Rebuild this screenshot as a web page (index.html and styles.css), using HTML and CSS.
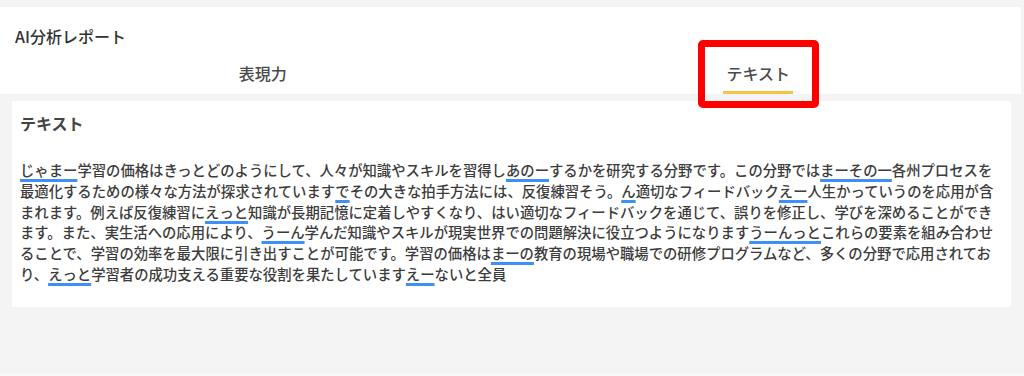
FILE: index.html
```html
<!DOCTYPE html>
<html lang="ja">
<head>
    <meta charset="UTF-8">
    <meta name="viewport" content="width=device-width, initial-scale=1.0">
    <title>AI分析レポート</title>
    <link rel="stylesheet" href="styles.css">
</head>
<body>
    <div class="page">
        <header class="report-header">
            <h1 class="report-title">AI分析レポート</h1>
            <nav class="tabs">
                <div class="tab"><span class="tab-label">表現力</span></div>
                <div class="tab active"><span class="tab-label">テキスト</span></div>
            </nav>
            <!-- annotation box around the active tab -->
            <div class="highlight"></div>
        </header>

        <section class="card">
            <h2 class="card-title">テキスト</h2>
            <p class="transcript"><span class="filler">じゃまー</span>学習の価格はきっとどのようにして、人々が知識やスキルを習得し<span class="filler">あのー</span>するかを研究する分野です。この分野では<span class="filler">まーその一</span>各州プロセスを最適化するための様々な方法が探求されています<span class="filler">で</span>その大きな拍手方法には、反復練習そう。<span class="filler">ん</span>適切なフィードバック<span class="filler">えー</span>人生かっていうのを応用が含まれます。例えば反復練習に<span class="filler">えっと</span>知識が長期記憶に定着しやすくなり、はい適切なフィードバックを通じて、誤りを修正し、学びを深めることができます。また、実生活への応用により、<span class="filler">うーん</span>学んだ知識やスキルが現実世界での問題解決に役立つようになります<span class="filler">うーんっと</span>これらの要素を組み合わせることで、学習の効率を最大限に引き出すことが可能です。学習の価格は<span class="filler">まーの</span>教育の現場や職場での研修プログラムなど、多くの分野で応用されており、<span class="filler">えっと</span>学習者の成功支える重要な役割を果たしています<span class="filler">えー</span>ないと全員</p>
        </section>
    </div>
</body>
</html>
```

FILE: styles.css
```css
html {
    background-color: #f8f8f8;
}
body {
    margin: 0;
    padding: 0;
    font-family: "Noto Sans CJK JP", "Noto Sans", sans-serif;
    color: #333;
    background-color: #f4f4f4;
}
.page {
    width: 1021px;
    height: 373px;
    padding-top: 7px;
    box-sizing: border-box;
    background-color: #f4f4f4;
}
.report-header {
    position: relative;
    background-color: #fff;
    padding: 18px 15px 0;
}
.report-title {
    margin: 0;
    font-size: 16px;
    font-weight: 500;
    line-height: 22px;
    color: #333;
}
.tabs {
    display: flex;
    margin-top: 14px;
}
.tab {
    flex: 1;
    text-align: center;
}
.tab-label {
    display: inline-block;
    padding: 0 3px 7px;
    font-size: 16px;
    font-weight: 500;
    line-height: 22px;
    color: #4a4a4a;
    border-bottom: 3px solid transparent;
}
.tab.active .tab-label {
    border-bottom-color: #f6c343; /* yellow underline */
}
.highlight {
    position: absolute;
    left: 698px;
    top: 33px;
    width: 121px;
    height: 68px;
    border: 7px solid #ff0000;
    border-radius: 5px;
    box-sizing: border-box;
}
.card {
    width: 999px;
    margin: 7px 0 0 12px;
    padding: 11px 8px 22px;
    box-sizing: border-box;
    background-color: #fff;
}
.card-title {
    margin: 0 0 26px;
    font-size: 16px;
    font-weight: bold;
    line-height: 22px;
    color: #444;
}
.transcript {
    margin: 0;
    font-size: 14.35px;
    font-weight: 500;
    line-height: 20.8px;
    color: #3c3c3c;
}
/* filler words */
.filler {
    text-decoration-line: underline;
    text-decoration-color: #3d90f5;
    text-decoration-thickness: 3px;
    text-underline-offset: 3px;
}
```
